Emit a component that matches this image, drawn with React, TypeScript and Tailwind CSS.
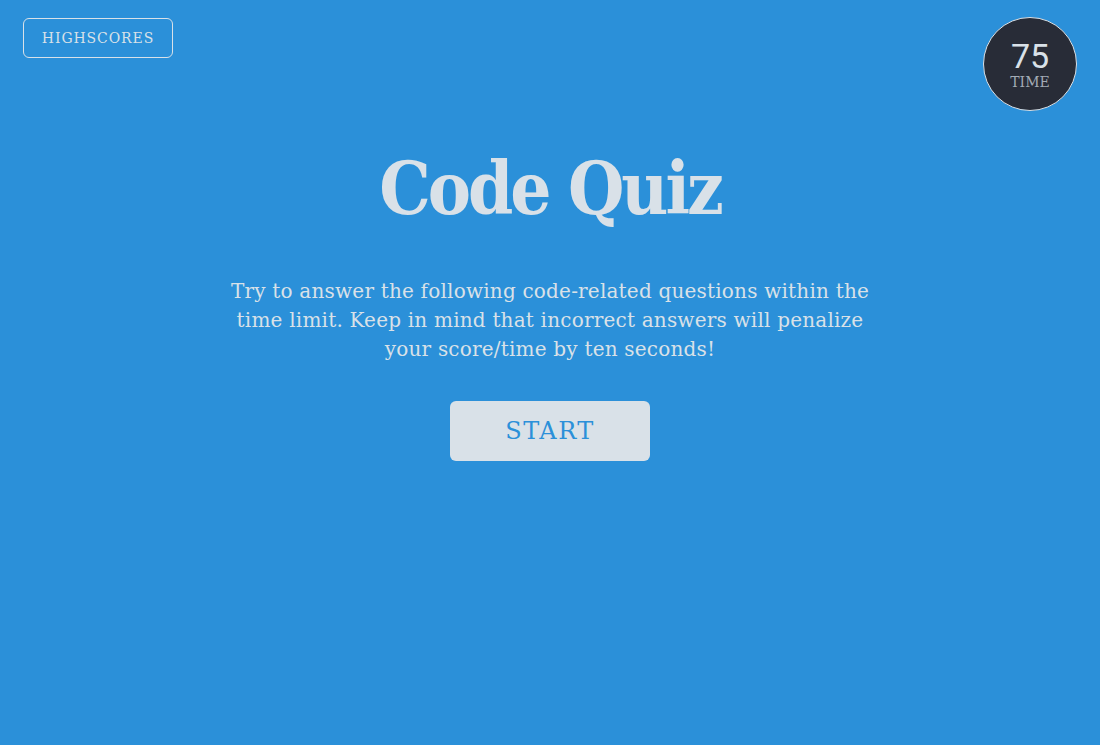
export default function App() {
  const slab = { fontFamily: '"DejaVu Serif", "Liberation Serif", serif' };
  return (
    <div className="min-h-[745px] w-full bg-[#2b90d9] text-[#d9e1e8]" style={slab}>
      <header className="flex items-start justify-between px-[23px] pt-[17px]">
        <button className="mt-px h-10 w-[150px] rounded-md border border-[#d9e1e8] text-[14px] tracking-[0.9px] text-[#d9e1e8]">
          HIGHSCORES
        </button>
        <div className="flex h-[94px] w-[94px] flex-col items-center justify-center rounded-full border border-[#d9e1e8] bg-[#282c37]">
          <span className="mt-1 text-[34px] leading-[32px] text-[#d9e1e8]" style={{ fontFamily: "Roboto, sans-serif" }}>
            75
          </span>
          <span className="text-[14px] leading-5 text-[#a3abb5]">TIME</span>
        </div>
      </header>
      <main className="flex flex-col items-center">
        <h1
          className="mt-[42px] text-[72px] font-bold leading-none tracking-[-3px]"
          style={{ fontFamily: '"DejaVu Serif Condensed", "DejaVu Serif", serif', fontStretch: "condensed" }}
        >
          Code Quiz
        </h1>
        <p className="mt-[52px] w-[660px] text-center text-[20px] leading-[29px] tracking-[0.2px]">
          Try to answer the following code-related questions within the time limit. Keep in mind that incorrect
          answers will penalize your score/time by ten seconds!
        </p>
        <button className="mt-[37px] h-[60px] w-[200px] rounded-md bg-[#d9e1e8] text-[24px] tracking-[1.5px] text-[#2b90d9]">
          START
        </button>
      </main>
    </div>
  );
}
